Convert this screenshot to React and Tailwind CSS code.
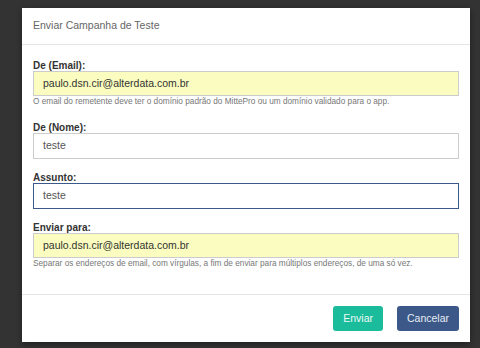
export default function App() {
  const font = { fontFamily: '"Liberation Sans", Arial, sans-serif' }

  return (
    <div className="w-[480px] h-[348px] bg-[#333333] pt-[8px] pl-[22px] overflow-hidden" style={font}>
      <div className="w-[448px] h-[334px] bg-white flex flex-col shadow-[0_2px_6px_rgba(0,0,0,0.4)]">
        {/* Header */}
        <div className="h-[37px] border-b border-[#e5e5e5] flex items-center px-[11px]">
          <h4 className="text-[10.5px] text-[#666666]">Enviar Campanha de Teste</h4>
        </div>

        {/* Body */}
        <div className="flex-1 px-[11px] pt-[15px]">
          <div className="mb-[15px]">
            <label className="block text-[10px] leading-[11px] font-bold text-[#333333]">De (Email):</label>
            <div className="h-[25px] border border-[#cccccc] bg-[#fafdbf] flex items-center pl-[9px] text-[10.5px] text-[#333333]">
              paulo.dsn.cir@alterdata.com.br
            </div>
            <p className="mt-[1px] text-[8.25px] leading-[10px] text-[#777777]">
              O email do remetente deve ter o domínio padrão do MittePro ou um domínio validado para o app.
            </p>
          </div>

          <div className="mb-[13px]">
            <label className="block text-[10px] leading-[11px] font-bold text-[#333333]">De (Nome):</label>
            <div className="h-[26px] border border-[#cccccc] bg-white flex items-center pl-[9px] text-[10.5px] text-[#555555]">
              teste
            </div>
          </div>

          <div className="mb-[13px]">
            <label className="block text-[10px] leading-[11px] font-bold text-[#333333]">Assunto:</label>
            <div className="h-[26px] border border-[#3b5a8a] bg-white flex items-center pl-[9px] text-[10.5px] text-[#555555]">
              teste
            </div>
          </div>

          <div>
            <label className="block text-[10px] leading-[11px] font-bold text-[#333333]">Enviar para:</label>
            <div className="h-[25px] border border-[#cccccc] bg-[#fafdbf] flex items-center pl-[9px] text-[10.5px] text-[#333333]">
              paulo.dsn.cir@alterdata.com.br
            </div>
            <p className="mt-[1px] text-[8.25px] leading-[10px] text-[#777777]">
              Separar os endereços de email, com vírgulas, a fim de enviar para múltiplos endereços, de uma só vez.
            </p>
          </div>
        </div>

        {/* Footer */}
        <div className="h-[48px] border-t border-[#e5e5e5] flex items-center justify-end gap-[14px] pr-[11px]">
          <button className="h-[25px] px-[10px] rounded-[3px] bg-[#1abc9c] text-[10.5px] text-[#eefaf6]">Enviar</button>
          <button className="h-[25px] px-[10px] rounded-[3px] bg-[#3b5888] text-[10.5px] text-[#e8edf5]">Cancelar</button>
        </div>
      </div>
    </div>
  )
}
